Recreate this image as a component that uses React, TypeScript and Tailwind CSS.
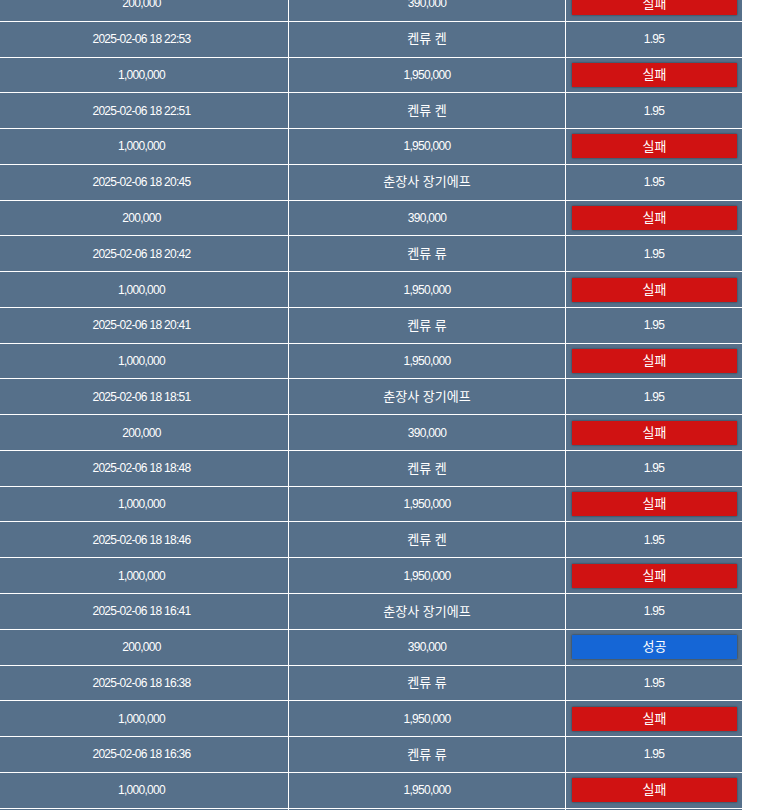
import React from 'react';

type Bet = {
  time: string;
  pick: string;
  odds: string;
  amount: string;
  payout: string;
  result: 'win' | 'lose';
};

const bets: Bet[] = [
  { time: '2025-02-06 18 22:53', pick: '켄류 켄', odds: '1.95', amount: '1,000,000', payout: '1,950,000', result: 'lose' },
  { time: '2025-02-06 18 22:51', pick: '켄류 켄', odds: '1.95', amount: '1,000,000', payout: '1,950,000', result: 'lose' },
  { time: '2025-02-06 18 20:45', pick: '춘장사 장기에프', odds: '1.95', amount: '200,000', payout: '390,000', result: 'lose' },
  { time: '2025-02-06 18 20:42', pick: '켄류 류', odds: '1.95', amount: '1,000,000', payout: '1,950,000', result: 'lose' },
  { time: '2025-02-06 18 20:41', pick: '켄류 류', odds: '1.95', amount: '1,000,000', payout: '1,950,000', result: 'lose' },
  { time: '2025-02-06 18 18:51', pick: '춘장사 장기에프', odds: '1.95', amount: '200,000', payout: '390,000', result: 'lose' },
  { time: '2025-02-06 18 18:48', pick: '켄류 켄', odds: '1.95', amount: '1,000,000', payout: '1,950,000', result: 'lose' },
  { time: '2025-02-06 18 18:46', pick: '켄류 켄', odds: '1.95', amount: '1,000,000', payout: '1,950,000', result: 'lose' },
  { time: '2025-02-06 18 16:41', pick: '춘장사 장기에프', odds: '1.95', amount: '200,000', payout: '390,000', result: 'win' },
  { time: '2025-02-06 18 16:38', pick: '켄류 류', odds: '1.95', amount: '1,000,000', payout: '1,950,000', result: 'lose' },
  { time: '2025-02-06 18 16:36', pick: '켄류 류', odds: '1.95', amount: '1,000,000', payout: '1,950,000', result: 'lose' },
  { time: '2025-02-06 18 16:30', pick: '켄류 켄', odds: '1.95', amount: '1,000,000', payout: '1,950,000', result: 'lose' },
];

const cell = 'h-[35.77px] p-0 border border-white text-center align-middle';
const num = 'tracking-[-0.7px]';

function ResultButton({ result }: { result: Bet['result'] }) {
  const win = result === 'win';
  return (
    <div
      className={`ml-[6px] w-[165px] h-[24px] flex items-center justify-center text-white text-[13px] shadow-[0_0_2px_rgba(0,0,0,0.55)] ${
        win ? 'bg-[#1566d6]' : 'bg-[#d01212]'
      }`}
    >
      {win ? '성공' : '실패'}
    </div>
  );
}

function AmountRow({ amount, payout, result }: { amount: string; payout: string; result: Bet['result'] }) {
  return (
    <tr>
      <td className={`${cell} ${num}`}>{amount}</td>
      <td className={`${cell} ${num}`}>{payout}</td>
      <td className={cell}>
        <ResultButton result={result} />
      </td>
    </tr>
  );
}

export default function App() {
  return (
    <div className="min-h-screen bg-white overflow-hidden">
      <table
        className="table-fixed border-collapse ml-[-6px] mt-[-15px] w-[748px] bg-[#56708a] text-white text-[12px]"
        style={{ fontFamily: '"Liberation Sans", "Noto Sans CJK KR", sans-serif' }}
      >
        <colgroup>
          <col className="w-[294px]" />
          <col className="w-[277px]" />
          <col className="w-[177px]" />
        </colgroup>
        <tbody>
          <AmountRow amount="200,000" payout="390,000" result="lose" />
          {bets.map((b, i) => (
            <React.Fragment key={i}>
              <tr>
                <td className={`${cell} ${num}`}>{b.time}</td>
                <td className={`${cell} text-[13px]`}>{b.pick}</td>
                <td className={`${cell} ${num}`}>{b.odds}</td>
              </tr>
              <AmountRow amount={b.amount} payout={b.payout} result={b.result} />
            </React.Fragment>
          ))}
        </tbody>
      </table>
    </div>
  );
}
